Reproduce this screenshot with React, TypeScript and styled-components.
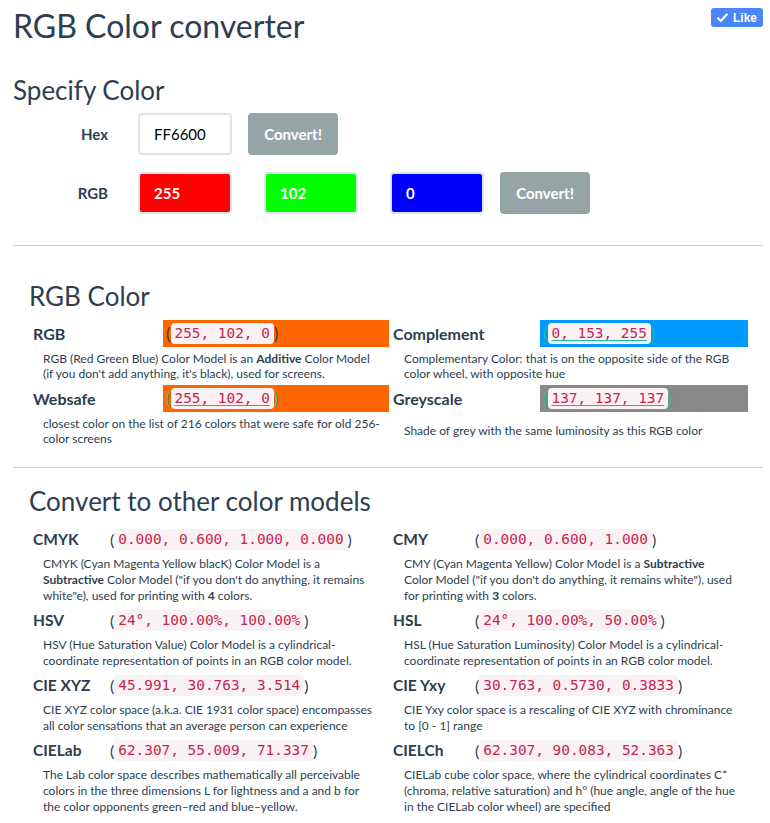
import React from "react";
import styled, { createGlobalStyle } from "styled-components";

const Global = createGlobalStyle`
  html, body { margin: 0; padding: 0; background: #fff; }
  body { font-family: Lato, "Open Sans", sans-serif; color: #2c3e50; }
  * { box-sizing: border-box; }
`;

const Page = styled.div`
  padding: 0 7px 0 13px;
  width: 770px;
`;

const Header = styled.div`
  display: flex;
  justify-content: space-between;
  align-items: flex-start;
`;

const Title = styled.h1`
  margin: 6px 0 0 0;
  font-size: 32px;
  font-weight: 400;
  line-height: 40px;
`;

const LikeButton = styled.button`
  margin-top: 8px;
  display: flex;
  align-items: center;
  gap: 4px;
  height: 19px;
  padding: 0 6px 0 5px;
  border: none;
  border-radius: 3px;
  background: #4a86f7;
  color: #fff;
  font-family: "Liberation Sans", Arial, sans-serif;
  font-weight: 700;
  font-size: 12px;
`;

const H2 = styled.h2<{ $indent?: number; $top: number }>`
  margin: ${(p) => p.$top}px 0 0 0;
  padding-left: ${(p) => p.$indent ?? 0}px;
  font-size: 26px;
  font-weight: 400;
  line-height: 32px;
`;

const Form = styled.div`
  display: grid;
  grid-template-columns: 95px auto;
  column-gap: 30px;
  row-gap: 17px;
  margin-top: 7px;
  margin-bottom: 31px;
  align-items: center;
`;

const FormLabel = styled.div`
  text-align: right;
  font-weight: 700;
  font-size: 15px;
`;

const Controls = styled.div`
  display: flex;
  align-items: center;
`;

const Field = styled.div<{ $bg: string; $fg: string; $bold?: boolean; $gap?: number }>`
  width: 94px;
  height: 42px;
  margin-right: ${(p) => p.$gap ?? 16}px;
  border: 2px solid #dce4ec;
  border-radius: 4px;
  background: ${(p) => p.$bg};
  color: ${(p) => p.$fg};
  font-weight: ${(p) => (p.$bold ? 700 : 400)};
  font-size: 15px;
  display: flex;
  align-items: center;
  padding-left: 14px;
`;

const Convert = styled.button`
  width: 90px;
  height: 42px;
  border: none;
  border-radius: 4px;
  background: #95a5a6;
  color: #fff;
  font-family: Lato, sans-serif;
  font-weight: 700;
  font-size: 15px;
`;

const Rule = styled.hr`
  margin: 0;
  border: none;
  border-top: 1px solid #cfcfcf;
  width: 750px;
`;

const ColorGrid = styled.div`
  display: grid;
  grid-template-columns: 150px 226px 151px 208px;
  align-items: center;
  margin-top: 8px;
  margin-bottom: 17px;
`;

const BigLabel = styled.div<{ $pad: number }>`
  padding-left: ${(p) => p.$pad}px;
  font-weight: 700;
  font-size: 16px;
  line-height: 27px;
`;

const Swatch = styled.div<{ $bg: string }>`
  background: ${(p) => p.$bg};
  height: 27px;
  display: flex;
  align-items: center;
  padding-left: 3px;
`;

const Desc = styled.div<{ $pl: number; $pr: number }>`
  grid-column: span 2;
  padding: 3.5px ${(p) => p.$pr}px 3.5px ${(p) => p.$pl}px;
  font-size: 12px;
  line-height: 15.5px;
`;

const Paren = styled.span<{ $link?: boolean; $size: number }>`
  color: ${(p) => (p.$link ? "#18bc9c" : "#2c3e50")};
  font-family: Lato, sans-serif;
  font-size: ${(p) => p.$size}px;
`;

const Code = styled.code<{ $link?: boolean }>`
  font-family: "DejaVu Sans Mono", monospace;
  font-size: 14.4px;
  line-height: 17px;
  color: #c7254e;
  background: #f9f2f4;
  border-radius: 4px;
  padding: 2px 4px;
  text-decoration: ${(p) => (p.$link ? "underline" : "none")};
  text-decoration-color: #18bc9c;
  text-underline-offset: 2px;
`;

const ModelGrid = styled.div`
  display: grid;
  grid-template-columns: 82px 278px 87px 273px;
  align-items: center;
  margin-top: 11px;
  margin-left: 15px;
`;

const ModelLabel = styled.div`
  padding-left: 5px;
  font-weight: 700;
  font-size: 15.5px;
  line-height: 22px;
`;

const ModelValue = styled.div`
  display: flex;
  align-items: center;
  height: 22px;
`;

const ModelDesc = styled.div<{ $pl: number; $pr: number }>`
  grid-column: span 2;
  padding: 6px ${(p) => p.$pr}px 5px ${(p) => p.$pl}px;
  font-size: 12px;
  line-height: 16px;
`;

const Check = () => (
  <svg width="13" height="11" viewBox="0 0 13 11">
    <path d="M1.5 5.8 L4.8 9 L11.5 1.8" fill="none" stroke="#fff" strokeWidth="2.2" />
  </svg>
);

const Value = ({ text, link, size }: { text: string; link?: boolean; size: number }) => (
  <>
    <Paren $link={link} $size={size}>(</Paren>
    <Code $link={link}>{text}</Code>
    <Paren $link={link} $size={size}>)</Paren>
  </>
);

const models: [string, string, React.ReactNode, string, string, React.ReactNode][] = [
  [
    "CMYK",
    "0.000, 0.600, 1.000, 0.000",
    <>CMYK (Cyan Magenta Yellow blacK) Color Model is a <b>Subtractive</b> Color Model ("if you don't do anything, it remains white"e), used for printing with <b>4</b> colors.</>,
    "CMY",
    "0.000, 0.600, 1.000",
    <>CMY (Cyan Magenta Yellow) Color Model is a <b>Subtractive</b> Color Model ("if you don't do anything, it remains white"), used for printing with <b>3</b> colors.</>,
  ],
  [
    "HSV",
    "24°, 100.00%, 100.00%",
    <>HSV (Hue Saturation Value) Color Model is a cylindrical-coordinate representation of points in an RGB color model.</>,
    "HSL",
    "24°, 100.00%, 50.00%",
    <>HSL (Hue Saturation Luminosity) Color Model is a cylindrical-coordinate representation of points in an RGB color model.</>,
  ],
  [
    "CIE XYZ",
    "45.991, 30.763, 3.514",
    <>CIE XYZ color space (a.k.a. CIE 1931 color space) encompasses all color sensations that an average person can experience</>,
    "CIE Yxy",
    "30.763, 0.5730, 0.3833",
    <>CIE Yxy color space is a rescaling of CIE XYZ with chrominance to [0 - 1] range</>,
  ],
  [
    "CIELab",
    "62.307, 55.009, 71.337",
    <>The Lab color space describes mathematically all perceivable colors in the three dimensions L for lightness and a and b for the color opponents green–red and blue–yellow.</>,
    "CIELCh",
    "62.307, 90.083, 52.363",
    <>CIELab cube color space, where the cylindrical coordinates C* (chroma, relative saturation) and h° (hue angle, angle of the hue in the CIELab color wheel) are specified</>,
  ],
];

export default function App() {
  return (
    <Page>
      <Global />
      <Header>
        <Title>RGB Color converter</Title>
        <LikeButton>
          <Check />
          Like
        </LikeButton>
      </Header>
      <H2 $top={28}>Specify Color</H2>
      <Form>
        <FormLabel>Hex</FormLabel>
        <Controls>
          <Field $bg="#fff" $fg="#000">FF6600</Field>
          <Convert>Convert!</Convert>
        </Controls>
        <FormLabel>RGB</FormLabel>
        <Controls>
          <Field $bg="#ff0000" $fg="#fff" $bold $gap={32}>255</Field>
          <Field $bg="#00ff00" $fg="#fff" $bold $gap={32}>102</Field>
          <Field $bg="#0000ff" $fg="#fff" $bold>0</Field>
          <Convert>Convert!</Convert>
        </Controls>
      </Form>
      <Rule />
      <H2 $indent={16} $top={34}>RGB Color</H2>
      <ColorGrid>
        <BigLabel $pad={20}>RGB</BigLabel>
        <Swatch $bg="#ff6600"><Value text="255, 102, 0" size={17} /></Swatch>
        <BigLabel $pad={4}>Complement</BigLabel>
        <Swatch $bg="#0099ff"><Value text="0, 153, 255" size={17} link /></Swatch>
        <Desc $pl={30} $pr={8}>RGB (Red Green Blue) Color Model is an <b>Additive</b> Color Model (if you don't add anything, it's black), used for screens.</Desc>
        <Desc $pl={15} $pr={6}>Complementary Color: that is on the opposite side of the RGB color wheel, with opposite hue</Desc>
        <BigLabel $pad={20}>Websafe</BigLabel>
        <Swatch $bg="#ff6600"><Value text="255, 102, 0" size={17} link /></Swatch>
        <BigLabel $pad={4}>Greyscale</BigLabel>
        <Swatch $bg="#898989"><Value text="137, 137, 137" size={17} link /></Swatch>
        <Desc $pl={30} $pr={8}>closest color on the list of 216 colors that were safe for old 256-color screens</Desc>
        <Desc $pl={15} $pr={6}>Shade of grey with the same luminosity as this RGB color</Desc>
      </ColorGrid>
      <Rule />
      <H2 $indent={16} $top={17}>Convert to other color models</H2>
      <ModelGrid>
        {models.map(([l1, v1, d1, l2, v2, d2]) => (
          <React.Fragment key={l1}>
            <ModelLabel>{l1}</ModelLabel>
            <ModelValue><Value text={v1} size={16} /></ModelValue>
            <ModelLabel>{l2}</ModelLabel>
            <ModelValue><Value text={v2} size={16} /></ModelValue>
            <ModelDesc $pl={15} $pr={15}>{d1}</ModelDesc>
            <ModelDesc $pl={16} $pr={12.5}>{d2}</ModelDesc>
          </React.Fragment>
        ))}
      </ModelGrid>
    </Page>
  );
}
